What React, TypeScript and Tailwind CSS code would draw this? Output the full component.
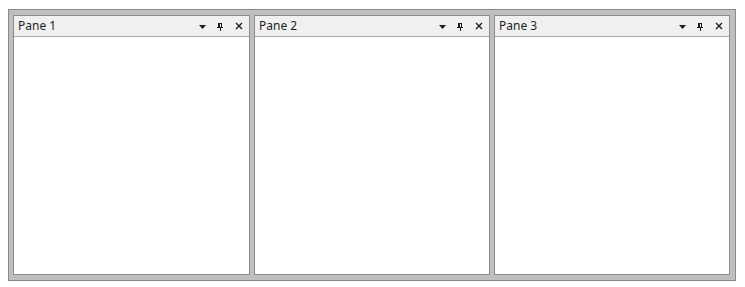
import React from "react";

function Pin() {
  return (
    <svg width="6" height="8" viewBox="0 0 6 8" className="block">
      <path d="M1.5 4.5 V0.5 H4.5 V4.5 M2.5 0.5 V4.5" stroke="#1e1e1e" strokeWidth="1" fill="none" shapeRendering="crispEdges" />
      <path d="M0 4.5 H6" stroke="#1e1e1e" strokeWidth="1" shapeRendering="crispEdges" />
      <path d="M3 5 V8" stroke="#1e1e1e" strokeWidth="1" shapeRendering="crispEdges" />
    </svg>
  );
}

function Close() {
  return (
    <svg width="8" height="8" viewBox="0 0 8 8" className="block">
      <path d="M1 1 L7 7 M7 1 L1 7" stroke="#1e1e1e" strokeWidth="1.4" />
    </svg>
  );
}

function Arrow() {
  return (
    <svg width="7" height="4" viewBox="0 0 7 4" className="block">
      <path d="M0 0 H7 L3.5 4 Z" fill="#1e1e1e" />
    </svg>
  );
}

function Pane({ title, wide }: { title: string; wide?: boolean }) {
  return (
    <div className={(wide ? "w-[237px]" : "w-[236px]") + " shrink-0 flex flex-col border border-[#8c8c8c] bg-white"}>
      <div className="h-[21px] flex items-center bg-[#f0f0f0] border-b border-[#a6a6a6] pl-[4px] pr-[6px]">
        <span className="text-[12px] leading-none text-[#1e1e1e] flex-1" style={{ fontFamily: '"Noto Sans", sans-serif' }}>
          {title}
        </span>
        <div className="flex items-center">
          <div className="mt-[1px]"><Arrow /></div>
          <div className="ml-[11px] mt-[1px]"><Pin /></div>
          <div className="ml-[12px]"><Close /></div>
        </div>
      </div>
      <div className="flex-1" />
    </div>
  );
}

export default function App() {
  return (
    <div className="w-[745px] h-[287px] bg-white pt-[9px] pl-[8px]">
      <div className="w-[728px] h-[272px] border border-[#8a8a8a] bg-[#bfbfbf] pl-[4px] pr-[5px] pt-[5px] pb-[5px] flex gap-[4px]">
        <Pane title="Pane 1" wide />
        <Pane title="Pane 2" />
        <Pane title="Pane 3" />
      </div>
    </div>
  );
}
